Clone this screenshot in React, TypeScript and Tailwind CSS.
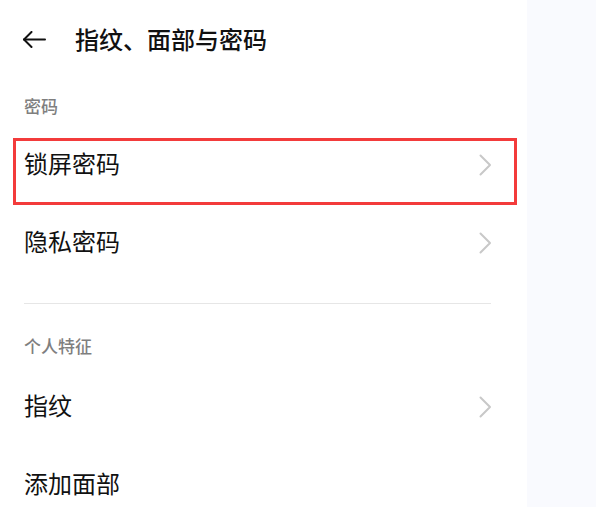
import React from "react";

const font = { fontFamily: '"Noto Sans CJK SC", "Noto Sans", sans-serif' };

function Chevron() {
  return (
    <svg width="13" height="22" viewBox="0 0 13 22" fill="none">
      <path d="M1.5 1.5 L11 11 L1.5 20.5" stroke="#c8c8c8" strokeWidth="2" strokeLinecap="round" strokeLinejoin="round" />
    </svg>
  );
}

function Row({ label, chevron = true, highlight = false }: { label: string; chevron?: boolean; highlight?: boolean }) {
  return (
    <div className="relative h-[78px] flex items-center pl-[24px] pr-[35px]">
      <span className="text-[24px] leading-[30px] text-[#111] pb-[4px]">{label}</span>
      <div className="flex-1" />
      {chevron && <Chevron />}
      {highlight && (
        <div className="absolute left-[13px] top-[12px] w-[504px] h-[67px] border-[3px] border-[#f33b3b] pointer-events-none" />
      )}
    </div>
  );
}

export default function App() {
  return (
    <div className="w-[596px] h-[507px] overflow-hidden flex bg-white" style={font}>
      <div className="w-[527px] shrink-0 bg-white">
        <div className="h-[78px] flex items-center">
          <div className="pl-[22px] w-[75px]">
            <svg width="24" height="17" viewBox="0 0 24 17" fill="none">
              <path d="M23 8.5 H2" stroke="#111" strokeWidth="2" strokeLinecap="round" />
              <path d="M9.5 1 L2 8.5 L9.5 16" stroke="#111" strokeWidth="2" strokeLinecap="round" strokeLinejoin="round" />
            </svg>
          </div>
          <span className="text-[24px] leading-[30px] font-medium text-[#111]">指纹、面部与密码</span>
        </div>
        <div className="h-[48px] pt-[16px] pl-[24px]">
          <span className="text-[17px] leading-[24px] font-medium text-[#7f7f7f] block">密码</span>
        </div>
        <Row label="锁屏密码" highlight />
        <Row label="隐私密码" />
        <div className="mt-[21px] ml-[24px] w-[467px] h-px bg-[#e6e6e6]" />
        <div className="h-[64px] pt-[30px] pl-[24px]">
          <span className="text-[17px] leading-[24px] font-medium text-[#7f7f7f] block">个人特征</span>
        </div>
        <Row label="指纹" />
        <Row label="添加面部" chevron={false} />
      </div>
      <div className="flex-1 bg-[#f9fafe]" />
    </div>
  );
}
